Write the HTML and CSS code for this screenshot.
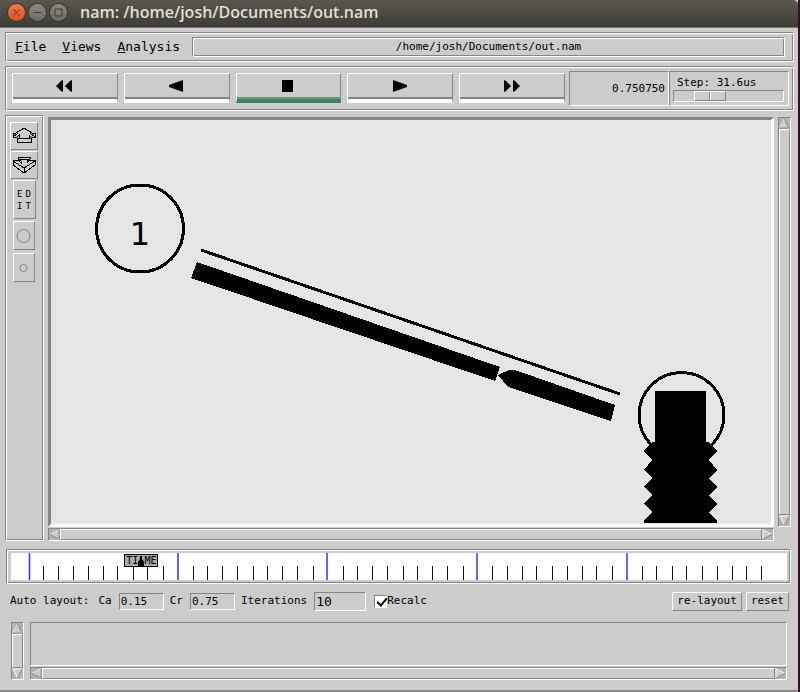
FILE: index.html
```html
<!DOCTYPE html>
<html lang="en">
<head>
<meta charset="utf-8">
<title>nam: /home/josh/Documents/out.nam</title>
<link rel="stylesheet" href="styles.css">
</head>
<body>
<div class="window">
  <header class="titlebar">
    <button class="wm wm-close" aria-label="Close"><svg viewBox="0 0 17 17"><path d="M5.500 5.500l6 6M11.500 5.500l-6 6"/></svg></button>
    <button class="wm" aria-label="Minimize"><svg viewBox="0 0 17 17"><path d="M4.500 8.500h8"/></svg></button>
    <button class="wm" aria-label="Maximize"><svg viewBox="0 0 17 17"><path d="M5 5h7v7h-7z"/></svg></button>
    <h1>nam: /home/josh/Documents/out.nam</h1>
  </header>

  <main class="content">
    <nav class="menubar ridge">
      <button class="menu"><u>F</u>ile</button>
      <button class="menu"><u>V</u>iews</button>
      <button class="menu"><u>A</u>nalysis</button>
      <div class="path">/home/josh/Documents/out.nam</div>
    </nav>

    <section class="toolbar ridge">
      <div class="transport">
        <button class="play" aria-label="Rewind"><svg viewBox="0 0 18 14"><path d="M7 1v12L5 12 0 7l5-5zM16 1v12l-2-1-5-5 5-5z"/></svg></button>
        <button class="play" aria-label="Play backward"><svg viewBox="0 0 18 14"><path d="M15 1v12L1 8V6z"/></svg></button>
        <button class="play active" aria-label="Stop"><svg viewBox="0 0 18 14"><path d="M3 1h11v12H3z"/></svg></button>
        <button class="play" aria-label="Play forward"><svg viewBox="0 0 18 14"><path d="M2 1v12l14-5V6z"/></svg></button>
        <button class="play" aria-label="Fast forward"><svg viewBox="0 0 18 14"><path d="M1 1v12l2-1 5-5-5-5zM10 1v12l2-1 5-5-5-5z"/></svg></button>
      </div>
      <output class="clock">0.750750</output>
      <div class="step">
        <label for="step">Step: 31.6us</label>
        <input id="step" type="range" min="0" max="100" value="26">
      </div>
    </section>

    <section class="workspace">
      <aside class="tools ridge">
        <button class="tool zoom" aria-label="Zoom in"><svg viewBox="0 0 24 24" shape-rendering="crispEdges"><path d="M12 4l8 5h3v4h-4l-2-2v3h2v4H5v-4h2v-3l-2 2H1V9h3zM5 14.500h14M1 12.500l5-3M23 12.500l-5-3"/></svg></button>
        <button class="tool zoom" aria-label="Zoom out"><svg viewBox="0 0 24 24" shape-rendering="crispEdges"><path d="M6 4h12v2l-3 2v2l3-3h5v5l-11 8-11-8V7h5l3 3V8L6 6zM1 8l11 7 11-7M12 15v5M7 6h10"/></svg></button>
        <button class="tool edit"><span><i>E</i><i>D</i></span><span><i>I</i><i>T</i></span></button>
        <button class="tool node" aria-label="Larger nodes"><svg viewBox="0 0 18 22"><circle cx="8.500" cy="11" r="6.500"/></svg></button>
        <button class="tool node" aria-label="Smaller nodes"><svg viewBox="0 0 18 22"><circle cx="8.500" cy="11" r="3.500"/></svg></button>
      </aside>
      <div class="view">
        <div class="canvas">
          <svg class="scene" viewBox="51 120 720 403" preserveAspectRatio="xMinYMin meet" shape-rendering="crispEdges">
            <circle class="ring" cx="140" cy="228.500" r="43.500"/>
            <text x="140" y="245" text-anchor="middle">1</text>
            <path class="link" d="M201 250L620 394"/>
            <path d="M197 262L500 367L495 381L191 278z"/>
            <path d="M498 375L509 370L515 370L615 405L611 421L508 387z"/>
            <circle class="ring" cx="681.500" cy="415" r="42.500"/>
            <path d="M655 391h51v51h3l8 9-8 9 8 10-8 8 8 9-8 8 8 9-8 8 8 9v2h-73v-2l8-9-8-8 8-9-8-8 8-9-8-8 8-10-8-9 8-9h3z"/>
          </svg>
        </div>
        <div class="scroll vertical">
          <svg viewBox="0 0 12 12"><path class="lit" d="M1 11L6 1"/><path class="dark" d="M6 1l5 10H1"/></svg>
          <i class="thumb"></i>
          <svg viewBox="0 0 12 12"><path class="lit" d="M11 1H1l5 10"/><path class="dark" d="M6 11l5-10"/></svg>
        </div>
        <div class="scroll horizontal">
          <svg viewBox="0 0 12 12"><path class="lit" d="M1 6l10-5"/><path class="dark" d="M11 1v10L1 6"/></svg>
          <i class="thumb"></i>
          <svg viewBox="0 0 12 12"><path class="lit" d="M1 11V1l10 5"/><path class="dark" d="M11 6L1 11"/></svg>
        </div>
      </div>
    </section>

    <section class="timeline ridge">
      <div class="track">
        <svg viewBox="0 0 776 27" preserveAspectRatio="none">
          <path class="minor" d="M32.500 13v14M47.500 13v14M62.500 13v14M77.500 13v14M92.500 13v14M106.500 13v14M122.500 13v14M136.500 13v14M152.500 13v14M182.500 13v14M196.500 13v14M211.500 13v14M226.500 13v14M242.500 13v14M256.500 13v14M271.500 13v14M286.500 13v14M302.500 13v14M332.500 13v14M346.500 13v14M361.500 13v14M376.500 13v14M392.500 13v14M406.500 13v14M421.500 13v14M436.500 13v14M452.500 13v14M481.500 13v14M496.500 13v14M511.500 13v14M525.500 13v14M541.500 13v14M556.500 13v14M571.500 13v14M585.500 13v14M601.500 13v14M631.500 13v14M645.500 13v14M661.500 13v14M675.500 13v14M691.500 13v14M706.500 13v14M721.500 13v14M735.500 13v14M750.500 13v14"/>
          <path class="major" d="M18.500 0v27M167 0v27M316 0v27M466 0v27M616 0v27"/>
        </svg>
        <div class="marker"><span>TI</span><svg viewBox="0 0 6 10"><path d="M2 0h2v3l2 3v4H0V6l2-3z"/></svg><span>ME</span></div>
      </div>
    </section>

    <form class="layout">
      <span class="caption">Auto layout:</span>
      <label for="ca">Ca</label><input id="ca" class="field" type="text" value="0.15">
      <label for="cr">Cr</label><input id="cr" class="field" type="text" value="0.75">
      <label for="iter">Iterations</label><input id="iter" class="field large" type="text" value="10">
      <label class="check"><input type="checkbox" checked>Recalc</label>
      <button type="button" class="push first">re-layout</button>
      <button type="button" class="push">reset</button>
    </form>

    <section class="notes">
      <div class="scroll vertical">
        <svg viewBox="0 0 12 12"><path class="lit" d="M1 11L6 1"/><path class="dark" d="M6 1l5 10H1"/></svg>
        <i class="thumb"></i>
        <svg viewBox="0 0 12 12"><path class="lit" d="M11 1H1l5 10"/><path class="dark" d="M6 11l5-10"/></svg>
      </div>
      <div class="list"></div>
      <div class="scroll horizontal">
        <svg viewBox="0 0 12 12"><path class="lit" d="M1 6l10-5"/><path class="dark" d="M11 1v10L1 6"/></svg>
        <i class="thumb"></i>
        <svg viewBox="0 0 12 12"><path class="lit" d="M1 11V1l10 5"/><path class="dark" d="M11 6L1 11"/></svg>
      </div>
    </section>
  </main>
</div>
</body>
</html>
```
FILE: styles.css
```css
:root {
  --face: #cccccc;
  --dark: #858585;
  --lit: #ffffff;
}

* { box-sizing: border-box; }

body {
  margin: 0;
  background: #2c1428;
  color: #000;
  font: 11px/14px "DejaVu Sans Mono", monospace;
}

button, input { font: inherit; color: inherit; }
button { padding: 0; border: 0; background: var(--face); }
svg { display: block; }

.window {
  display: flex;
  flex-direction: column;
  min-height: 100vh;
  margin-right: 2px;
  background: var(--face);
  border-bottom: 2px solid #8a8a8a;
}

/* Title bar */
.titlebar {
  display: flex;
  align-items: center;
  gap: 4px;
  height: 28px;
  padding: 0 8px 3px;
  background: linear-gradient(#59574e, #3d3c37);
  border-bottom: 1px solid #75746f;
  border-top-right-radius: 5px;
}

.titlebar h1 {
  margin: 0 0 0 9px;
  color: #e2ded3;
  font: 600 16px/22px "Open Sans", sans-serif;
  white-space: nowrap;
}

.wm {
  width: 17px;
  height: 17px;
  border-radius: 50%;
  background: linear-gradient(#8a8880, #6c6a63);
  box-shadow: 0 0 0 1px #393833;
}

.wm svg { fill: none; stroke: #3f3e39; }
.wm-close { background: linear-gradient(#f4784e, #e0501f); }

/* Frames */
.content {
  flex: 1;
  display: flex;
  flex-direction: column;
  padding: 4px 4px 10px 5px;
}

.ridge {
  border: 1px solid;
  border-color: var(--dark) var(--lit) var(--lit) var(--dark);
  box-shadow: inset 1px 1px var(--lit), inset -1px -1px var(--dark);
}

/* Menu bar */
.menubar {
  display: flex;
  align-items: center;
  gap: 16px;
  height: 30px;
  padding: 0 8px 0 9px;
}

.menu { font-size: 13px; line-height: 18px; }

.menu u {
  text-decoration-thickness: 1px;
  text-decoration-skip-ink: none;
  text-underline-offset: 1px;
}

.path {
  flex: 1;
  height: 20px;
  margin-left: -4px;
  border: 1px solid;
  border-color: var(--dark) var(--lit) var(--lit) var(--dark);
  box-shadow: inset 1px 1px var(--lit), inset -1px -1px var(--dark);
  line-height: 18px;
  text-align: center;
}

/* Transport bar */
.toolbar {
  display: flex;
  height: 45px;
  margin-top: 4px;
  padding: 4px;
}

.transport {
  flex: 1;
  display: flex;
  gap: 6px;
  padding: 2px 4px 3px 2px;
}

.play {
  flex: 1;
  display: flex;
  justify-content: center;
  height: 30px;
  padding-top: 5px;
  border: 1px solid;
  border-color: var(--lit) var(--dark) var(--lit) var(--lit);
  border-bottom-width: 4px;
  box-shadow: inset 0 -2px var(--dark);
}

.play svg { width: 18px; height: 14px; }
.active { border-bottom-color: #2e8b57; }

.clock {
  width: 100px;
  padding: 10px 3px 0 0;
  border: 1px solid;
  border-color: var(--dark) var(--lit) var(--lit) var(--dark);
  text-align: right;
}

.step {
  width: 120px;
  padding: 4px 4px 0 3px;
  border: 1px solid;
  border-color: var(--dark) var(--lit) var(--lit) var(--dark);
}

.step label { display: block; padding-left: 4px; }

.step input {
  appearance: none;
  display: block;
  width: 100%;
  height: 12px;
  margin: 0;
  border: 1px solid;
  border-color: var(--dark) var(--lit) var(--lit) var(--dark);
  background: var(--face);
}

.step input::-webkit-slider-thumb {
  appearance: none;
  width: 32px;
  height: 10px;
  border: 1px solid;
  border-color: var(--lit) var(--dark) var(--dark) var(--lit);
  background: linear-gradient(90deg, var(--face) 14px, var(--dark) 14px 15px, var(--lit) 15px 16px, var(--face) 16px);
}

/* Workspace */
.workspace {
  flex: 1;
  display: flex;
  gap: 4px;
  margin-top: 4px;
}

.tools {
  display: flex;
  flex-direction: column;
  align-items: center;
  width: 39px;
  padding: 6px 1px 6px 0;
}

.tool {
  display: flex;
  flex-direction: column;
  align-items: center;
  justify-content: center;
  border: 1px solid;
  border-color: var(--lit) var(--dark) var(--dark) var(--lit);
}

.zoom { width: 28px; height: 28px; margin-bottom: 1px; }
.zoom svg { width: 24px; height: 24px; fill: none; stroke: #000; }

.edit {
  width: 23px;
  height: 39px;
  margin-bottom: 2px;
  font: 9px/12px "DejaVu Sans Mono", monospace;
  -webkit-text-stroke: 0;
}

.edit span { display: flex; gap: 3px; }
.edit i { font-style: normal; }
.node { width: 22px; height: 29px; margin-bottom: 3px; }
.node svg { width: 18px; height: 22px; fill: none; stroke: #858585; }

.view {
  flex: 1;
  display: grid;
  grid-template-columns: minmax(0, 1fr) 13px;
  grid-template-rows: minmax(0, 1fr) 13px;
  column-gap: 4px;
  row-gap: 1px;
  padding: 2px 3px 0 0;
}

.canvas {
  position: relative;
  min-height: 300px;
  border: 3px solid;
  border-color: var(--dark) var(--lit) var(--lit) var(--dark);
  background: #e5e5e5;
}

.scene {
  position: absolute;
  inset: 0;
  width: 100%;
  height: 100%;
}

.scene .ring { fill: none; stroke: #000; stroke-width: 3; }
.scene .link { stroke: #000; stroke-width: 3; }
.scene text { font: 32px "DejaVu Sans", sans-serif; }

/* Scroll bars */
.scroll {
  display: flex;
  border: 1px solid;
  border-color: var(--dark) var(--lit) var(--lit) var(--dark);
  background: #b3b3b3;
}

.vertical { flex-direction: column; width: 13px; }
.horizontal { height: 13px; }
.scroll svg { width: 11px; height: 11px; fill: var(--face); }
.lit { stroke: var(--lit); }
.dark { stroke: var(--dark); }

.thumb {
  flex: 1;
  border: 1px solid;
  border-color: var(--lit) var(--dark) var(--dark) var(--lit);
  background: var(--face);
}

/* Timeline */
.timeline {
  height: 35px;
  margin: 8px 3px 0 1px;
  padding: 3px 3px 3px 4px;
}

.track { position: relative; height: 27px; background: #fff; }
.track > svg { width: 100%; height: 100%; }
.minor { stroke: #111; }
.major { stroke: #3333ee; stroke-width: 1.500; }

.marker {
  position: absolute;
  left: 15%;
  top: 1px;
  display: flex;
  align-items: center;
  justify-content: center;
  width: 34px;
  height: 13px;
  margin-left: -3px;
  border: 1px solid #000;
  background: #aaa;
  font-size: 10px;
  line-height: 10px;
}

.marker svg { width: 6px; height: 10px; }

/* Layout controls */
.layout {
  display: flex;
  align-items: center;
  height: 22px;
  margin: 6px 5px 0;
}

.caption { margin-right: 9px; }

.field {
  width: 45px;
  height: 17px;
  margin: 0 6px 0 7px;
  padding: 0 1px;
  border: 1px solid;
  border-color: var(--dark) var(--lit) var(--lit) var(--dark);
  border-radius: 0;
  background: var(--face);
}

.large { width: 52px; height: 19px; font-size: 13px; }

.check { display: flex; align-items: center; }

.check input {
  appearance: none;
  width: 13px;
  height: 13px;
  margin: 0 0 0 2px;
  border: 1px solid;
  border-color: var(--dark) var(--lit) var(--lit) var(--dark);
  background: #fff;
}

.check input:checked::before {
  content: "";
  display: block;
  width: 4px;
  height: 8px;
  margin: 0 0 0 4px;
  border: solid #000;
  border-width: 0 2px 2px 0;
  transform: rotate(40deg);
}

.push {
  height: 19px;
  margin-left: 4px;
  padding: 0 4px;
  border: 1px solid;
  border-color: var(--lit) var(--dark) var(--dark) var(--lit);
}

.first { margin-left: auto; }

/* Lower list */
.notes {
  display: grid;
  grid-template-columns: 13px minmax(0, 1fr);
  grid-template-rows: 44px 13px;
  column-gap: 6px;
  row-gap: 1px;
  margin: 10px 7px 0 6px;
}

.notes .vertical { grid-row: 1 / 3; }

.list {
  border: 1px solid;
  border-color: var(--dark) var(--lit) var(--lit) var(--dark);
}
```
